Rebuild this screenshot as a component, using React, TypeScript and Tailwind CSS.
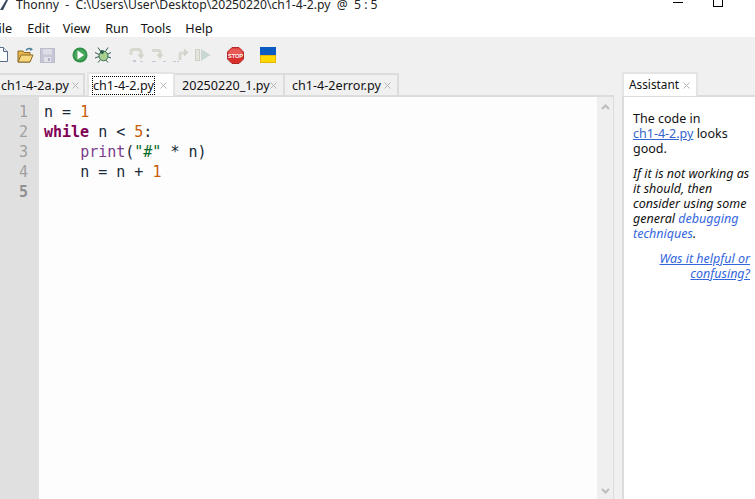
const uiFont = { fontFamily: '"Noto Sans", "Open Sans", sans-serif' };

function NewFileIcon() {
  return (
    <svg width="9" height="16" viewBox="0 0 9 16" className="ml-[-1px]">
      <path d="M-2 .5H4.5L8.5 4.5V14.5H-2Z" fill="#fbfcfe" stroke="#5b6b8c" />
      <path d="M4.5 .5V4.5H8.5" fill="#dfe6f2" stroke="#5b6b8c" />
    </svg>
  );
}

function FolderIcon() {
  return (
    <svg width="17" height="17" viewBox="0 0 17 17" className="ml-[9px]">
      <path d="M1 15V4H6L7 5.5H13V15Z" fill="#e9b64f" stroke="#8a6a25" />
      <path d="M1 15L4 8H16L13 15Z" fill="#f8d77e" stroke="#8a6a25" />
      <path d="M9 3.5C10 1.5 12 1 14 2" fill="none" stroke="#4d7f97" strokeWidth="1.4" />
      <path d="M13.5 .5L16 2.5L13 4Z" fill="#4d7f97" />
    </svg>
  );
}

function SaveIcon() {
  return (
    <svg width="15" height="15" viewBox="0 0 15 15" className="ml-[6px]">
      <rect x=".5" y=".5" width="14" height="14" fill="#c6c7d6" stroke="#bbbccb" />
      <rect x="3" y="1" width="9" height="5.5" fill="#dcdde6" />
      <rect x="4" y="9" width="7" height="5" fill="#e3e4ea" />
      <rect x="8" y="10" width="2" height="3" fill="#b0b1c2" />
    </svg>
  );
}

function RunIcon() {
  return (
    <svg width="16" height="16" viewBox="0 0 16 16" className="ml-[17px]">
      <circle cx="8" cy="8" r="7.5" fill="#2f8f46" />
      <circle cx="8" cy="8" r="5.8" fill="#48a95d" />
      <path d="M5.5 3.5L12 8L5.5 12.5Z" fill="#ffffff" />
    </svg>
  );
}

function DebugIcon() {
  return (
    <svg width="16" height="16" viewBox="0 0 16 16" className="ml-[7px]">
      <g stroke="#2e5d50" strokeWidth="1" fill="none">
        <path d="M3 .5L6 5M13 .5L10 5M0 5.5L4 7.5M16 5.5L12 7.5M0 11L4 9.5M16 11L12 9.5M3 15.5L6 12M13 15.5L10 12" />
      </g>
      <ellipse cx="8.5" cy="9" rx="4.5" ry="4.8" fill="#a8cf8e" stroke="#3c6f5c" />
      <circle cx="7" cy="5" r="2" fill="#2e5d50" />
    </svg>
  );
}

function StepOverIcon() {
  return (
    <svg width="16" height="16" viewBox="0 0 16 16" className="ml-[18px]">
      <path d="M2 8V4.5C2 3 3 2.5 4.5 2.5H9C11 2.5 12 3.5 12 5.5V8" fill="none" stroke="#d8d8d0" strokeWidth="3" />
      <path d="M8.5 7.5H15.5L12 12Z" fill="#d0d4c8" />
      <rect x="4" y="13" width="3" height="2" fill="#c2cad6" />
      <rect x="11" y="14" width="3" height="1" fill="#c2cad6" />
    </svg>
  );
}

function StepIntoIcon() {
  return (
    <svg width="16" height="16" viewBox="0 0 16 16" className="ml-[6px]">
      <path d="M1 3.5H7.5C8.5 3.5 9 4 9 5V8" fill="none" stroke="#d8d8d0" strokeWidth="3" />
      <path d="M5.5 7.5H12.5L9 12Z" fill="#d0d4c8" />
      <rect x="1" y="14" width="4" height="1" fill="#c2cad6" />
      <rect x="12" y="14" width="3" height="1" fill="#c2cad6" />
    </svg>
  );
}

function StepOutIcon() {
  return (
    <svg width="16" height="16" viewBox="0 0 16 16" className="ml-[6px]">
      <path d="M7 13V7.5C7 6.5 7.5 6 8.5 6H11" fill="none" stroke="#d8d8d0" strokeWidth="3" />
      <path d="M11 1.5V9.5L15.5 5.5Z" fill="#d0d4c8" />
      <rect x="0" y="14" width="3" height="1" fill="#c2cad6" />
      <rect x="4" y="14" width="2" height="1" fill="#c2cad6" />
    </svg>
  );
}

function ResumeIcon() {
  return (
    <svg width="16" height="16" viewBox="0 0 16 16" className="ml-[6px]">
      <rect x=".5" y="2.5" width="4" height="11" fill="#e4e4dc" stroke="#d0d0c6" />
      <path d="M6 2L15.5 8L6 14Z" fill="#c8d8d0" />
    </svg>
  );
}

function StopIcon() {
  return (
    <svg width="17" height="17" viewBox="0 0 17 17" className="ml-[16px]">
      <path d="M5 .5H12L16.5 5V12L12 16.5H5L.5 12V5Z" fill="#d9302c" stroke="#b02a28" />
      <path d="M5 1.5H12L15.5 5V8H1.5V5Z" fill="#e85a55" />
      <text x="8.5" y="10.8" textAnchor="middle" fontSize="5.6" fontWeight="700" fill="#ffffff" fontFamily="Liberation Sans, sans-serif">
        STOP
      </text>
    </svg>
  );
}

function UkraineFlag() {
  return (
    <div className="ml-[16px] flex h-[16px] w-[16px] flex-col">
      <div className="h-[8px] bg-[#0a5cc2]" />
      <div className="h-[8px] border border-[#e8b800] bg-[#ffd800]" />
    </div>
  );
}

function CloseMark() {
  return (
    <svg width="7" height="7" viewBox="0 0 7 7" className="ml-auto shrink-0">
      <path d="M.5 .5L6.5 6.5M6.5 .5L.5 6.5" stroke="#b4b4b4" strokeWidth="1" />
    </svg>
  );
}

function Tab({ label, active, className }: { label: string; active?: boolean; className: string }) {
  return (
    <div
      className={
        "flex items-center border-t-2 border-r-2 " +
        (active
          ? "relative z-10 -mb-px h-[24px] border-l-2 border-[#e4e4e4] bg-white "
          : "h-[22px] border-[#dcdcdc] bg-[#f0f0f0] ") +
        className
      }
    >
      <span className={active ? "outline-1 outline-dotted outline-black" : ""}>{label}</span>
      <CloseMark />
    </div>
  );
}

function Chevron({ down }: { down?: boolean }) {
  return (
    <svg width="9" height="6" viewBox="0 0 9 6" className={down ? "rotate-180" : ""}>
      <path d="M1 5L4.5 1.5L8 5" fill="none" stroke="#bdbdbd" strokeWidth="2" />
    </svg>
  );
}

const kw = "font-bold text-[#7f0055]";
const num = "text-[#c65d09]";

export default function App() {
  return (
    <div className="flex h-[499px] w-[755px] flex-col overflow-hidden bg-white text-black" style={uiFont}>
      <div className="flex h-[18px] shrink-0 items-start">
        <svg width="8" height="10" viewBox="0 0 8 10">
          <path d="M0 10L6 0H8L3 10Z" fill="#33475b" />
        </svg>
        <span className="ml-[8px] mt-[-4px] whitespace-pre text-[12.2px] leading-[18px] text-[#222]">
          Thonny  -  C:\Users\User\Desktop\20250220\ch1-4-2.py  @  5 : 5
        </span>
        <div className="ml-auto mr-[32px] flex items-start gap-[30px]">
          <div className="mt-[2px] h-px w-[10px] bg-black" />
          <div className="h-[7px] w-[10px] border border-t-0 border-black" />
        </div>
      </div>

      <div className="flex h-[19px] shrink-0 items-center whitespace-pre pt-[3px] text-[12.6px] leading-none text-[#111]">
        <span className="ml-[-8px]">File</span>
        <span className="ml-[15px]">Edit</span>
        <span className="ml-[13px]">View</span>
        <span className="ml-[15px]">Run</span>
        <span className="ml-[12px]">Tools</span>
        <span className="ml-[14px]">Help</span>
      </div>

      <div className="flex h-[35px] shrink-0 items-center bg-[#f0f0f0] pt-[1px]">
        <NewFileIcon />
        <FolderIcon />
        <SaveIcon />
        <RunIcon />
        <DebugIcon />
        <StepOverIcon />
        <StepIntoIcon />
        <StepOutIcon />
        <ResumeIcon />
        <StopIcon />
        <UkraineFlag />
      </div>

      <div className="flex min-h-0 flex-1 bg-[#f0f0f0]">
        <div className="flex w-[614px] shrink-0 flex-col">
          <div className="flex h-[23px] shrink-0 items-end whitespace-pre text-[12.6px] leading-[17px] text-[#111]">
            <Tab label="ch1-4-2a.py" className="ml-[-1px] w-[86px] pl-[2px] pr-[4px]" />
            <Tab label="ch1-4-2.py" active className="ml-[2px] w-[88px] pl-[4px] pr-[6px]" />
            <Tab label="20250220_1.py" className="w-[110px] pl-[7px] pr-[6px]" />
            <Tab label="ch1-4-2error.py" className="w-[114px] pl-[7px] pr-[6px]" />
          </div>
          <div className="flex min-h-0 flex-1 border-t-2 border-r border-[#dcdcdc]">
            <div
              className="w-[39px] shrink-0 bg-[#e0e0e0] pt-[5px] pr-[11px] text-right text-[15px] leading-[20px] text-[#a0a0a0]"
              style={{ fontFamily: '"DejaVu Sans Mono", monospace' }}
            >
              <div>1</div>
              <div>2</div>
              <div>3</div>
              <div>4</div>
              <div className="font-bold text-[#909090]">5</div>
            </div>
            <pre
              className="min-w-0 flex-1 bg-[#fdfdfd] pt-[5px] pl-[5px] text-[15px] leading-[20px] text-[#1a2a3a]"
              style={{ fontFamily: '"DejaVu Sans Mono", monospace' }}
            >
              <div>
                n = <span className={num}>1</span>
              </div>
              <div>
                <span className={kw}>while</span> n {"<"} <span className={num}>5</span>:
              </div>
              <div>
                {"    "}
                <span className="text-[#7a3a8c]">print</span>(<span className="text-[#0b6b2b]">"#"</span> * n)
              </div>
              <div>
                {"    "}n = n + <span className={num}>1</span>
              </div>
            </pre>
            <div className="flex w-[16px] shrink-0 flex-col items-center justify-between bg-[#efefef] pt-[7px] pb-[5px]">
              <Chevron />
              <Chevron down />
            </div>
          </div>
        </div>

        <div className="ml-[8px] flex min-w-0 flex-1 flex-col">
          <div className="flex h-[23px] shrink-0 items-end whitespace-pre text-[11.8px] text-[#111]">
            <div className="relative z-10 -mb-[1px] flex h-[24px] w-[76px] items-center border-x-2 border-t-2 border-[#e4e4e4] bg-white pl-[5px] pr-[6px]">
              Assistant
              <CloseMark />
            </div>
          </div>
          <div className="min-h-0 flex-1 border-t-2 border-l-2 border-[#dcdcdc] bg-white pt-[14px] pl-[9px] text-[12.5px] leading-[15.2px] text-[#111]">
            <p>
              The code in
              <br />
              <span className="text-[#3366cc] underline">ch1-4-2.py</span> looks
              <br />
              good.
            </p>
            <p className="mt-[9px] whitespace-nowrap italic">
              If it is not working as
              <br />
              it should, then
              <br />
              consider using some
              <br />
              general <span className="text-[#3366dd]">debugging</span>
              <br />
              <span className="text-[#3366dd]">techniques</span>.
            </p>
            <p className="mt-[9px] mr-[5px] whitespace-nowrap text-right italic text-[#3366dd] underline">
              Was it helpful or
              <br />
              confusing?
            </p>
          </div>
        </div>
      </div>
    </div>
  );
}
